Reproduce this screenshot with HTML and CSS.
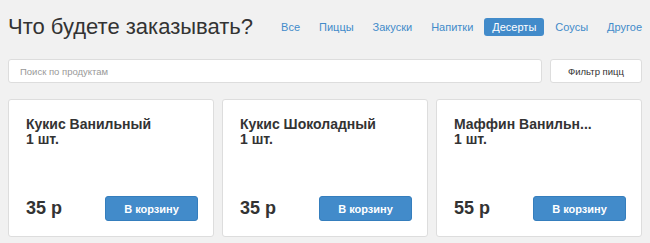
FILE: index.html
```html
<!DOCTYPE html>
<html lang="ru">
<head>
    <meta charset="UTF-8">
    <meta name="viewport" content="width=device-width, initial-scale=1.0">
    <link rel="stylesheet" href="styles.css">
    <title>Заказ</title>
</head>
<body>
    <header class="header">
        <h1 class="title">Что будете заказывать?</h1>
        <nav class="menu">
            <a href="#">Все</a>
            <a href="#">Пиццы</a>
            <a href="#">Закуски</a>
            <a href="#">Напитки</a>
            <a href="#" class="active">Десерты</a>
            <a href="#">Соусы</a>
            <a href="#">Другое</a>
        </nav>
    </header>
    <section class="search">
        <input class="search-input" type="text" placeholder="Поиск по продуктам">
        <button class="btn btn-default">Фильтр пицц</button>
    </section>
    <main class="products">
        <article class="card">
            <h2 class="card-title">Кукис Ванильный<br>1 шт.</h2>
            <div class="card-footer">
                <span class="price">35 р</span>
                <button class="btn btn-primary">В корзину</button>
            </div>
        </article>
        <article class="card">
            <h2 class="card-title">Кукис Шоколадный<br>1 шт.</h2>
            <div class="card-footer">
                <span class="price">35 р</span>
                <button class="btn btn-primary">В корзину</button>
            </div>
        </article>
        <article class="card">
            <h2 class="card-title">Маффин Ванильн...<br>1 шт.</h2>
            <div class="card-footer">
                <span class="price">55 р</span>
                <button class="btn btn-primary">В корзину</button>
            </div>
        </article>
    </main>
</body>
</html>
```

FILE: styles.css
```css
html{
    box-sizing: border-box;
    font-family: "Liberation Sans", Arial, sans-serif;
    font-size: 14px;
    color: #333;
}
*,
*:before,
*:after{
    box-sizing: inherit;
}
body{
    margin: 0;
    padding: 8px;
    background-color: #f1f1f1;
}
.header{
    display: flex;
    justify-content: space-between;
    align-items: center;
    height: 38px;
}
.title{
    margin: 0;
    font-size: 22px;
    font-weight: normal;
    white-space: nowrap;
    color: #333;
}
.menu{
    display: flex;
    gap: 3px;
    margin-right: -8px;
}
.menu a{
    color: #428bca;
    font-size: 11px;
    text-decoration: none;
    padding: 3px 8px;
    border-radius: 3px;
}
.menu a.active{
    color: #fff;
    background-color: #428bca;
}
.search{
    display: flex;
    gap: 8px;
    margin-top: 13px;
}
.search-input{
    flex-grow: 1;
    height: 24px;
    padding: 0 11px;
    font-family: inherit;
    font-size: 9.5px;
    border: 1px solid #ddd;
    border-radius: 3px;
    background-color: #fff;
}
.search-input::placeholder{
    color: #999;
}
.btn{
    font-family: inherit;
    border-radius: 3px;
    cursor: pointer;
}
.btn-default{
    width: 92px;
    height: 24px;
    font-size: 9.5px;
    color: #333;
    background-color: #fff;
    border: 1px solid #ddd;
}
.products{
    display: flex;
    gap: 8px;
    margin-top: 16px;
}
.card{
    flex: 1;
    height: 138px;
    padding: 17px 15px 15px 17px;
    display: flex;
    flex-direction: column;
    justify-content: space-between;
    background-color: #fff;
    border: 1px solid #ddd;
    border-radius: 3px;
}
.card-title{
    margin: 0;
    font-size: 14px;
    line-height: 15px;
}
.card-footer{
    display: flex;
    justify-content: space-between;
    align-items: center;
}
.price{
    font-size: 18px;
    font-weight: bold;
}
.btn-primary{
    width: 93px;
    height: 25px;
    font-size: 11px;
    font-weight: bold;
    color: #fff;
    background-color: #428bca;
    border: 1px solid #357ebd;
}
```
